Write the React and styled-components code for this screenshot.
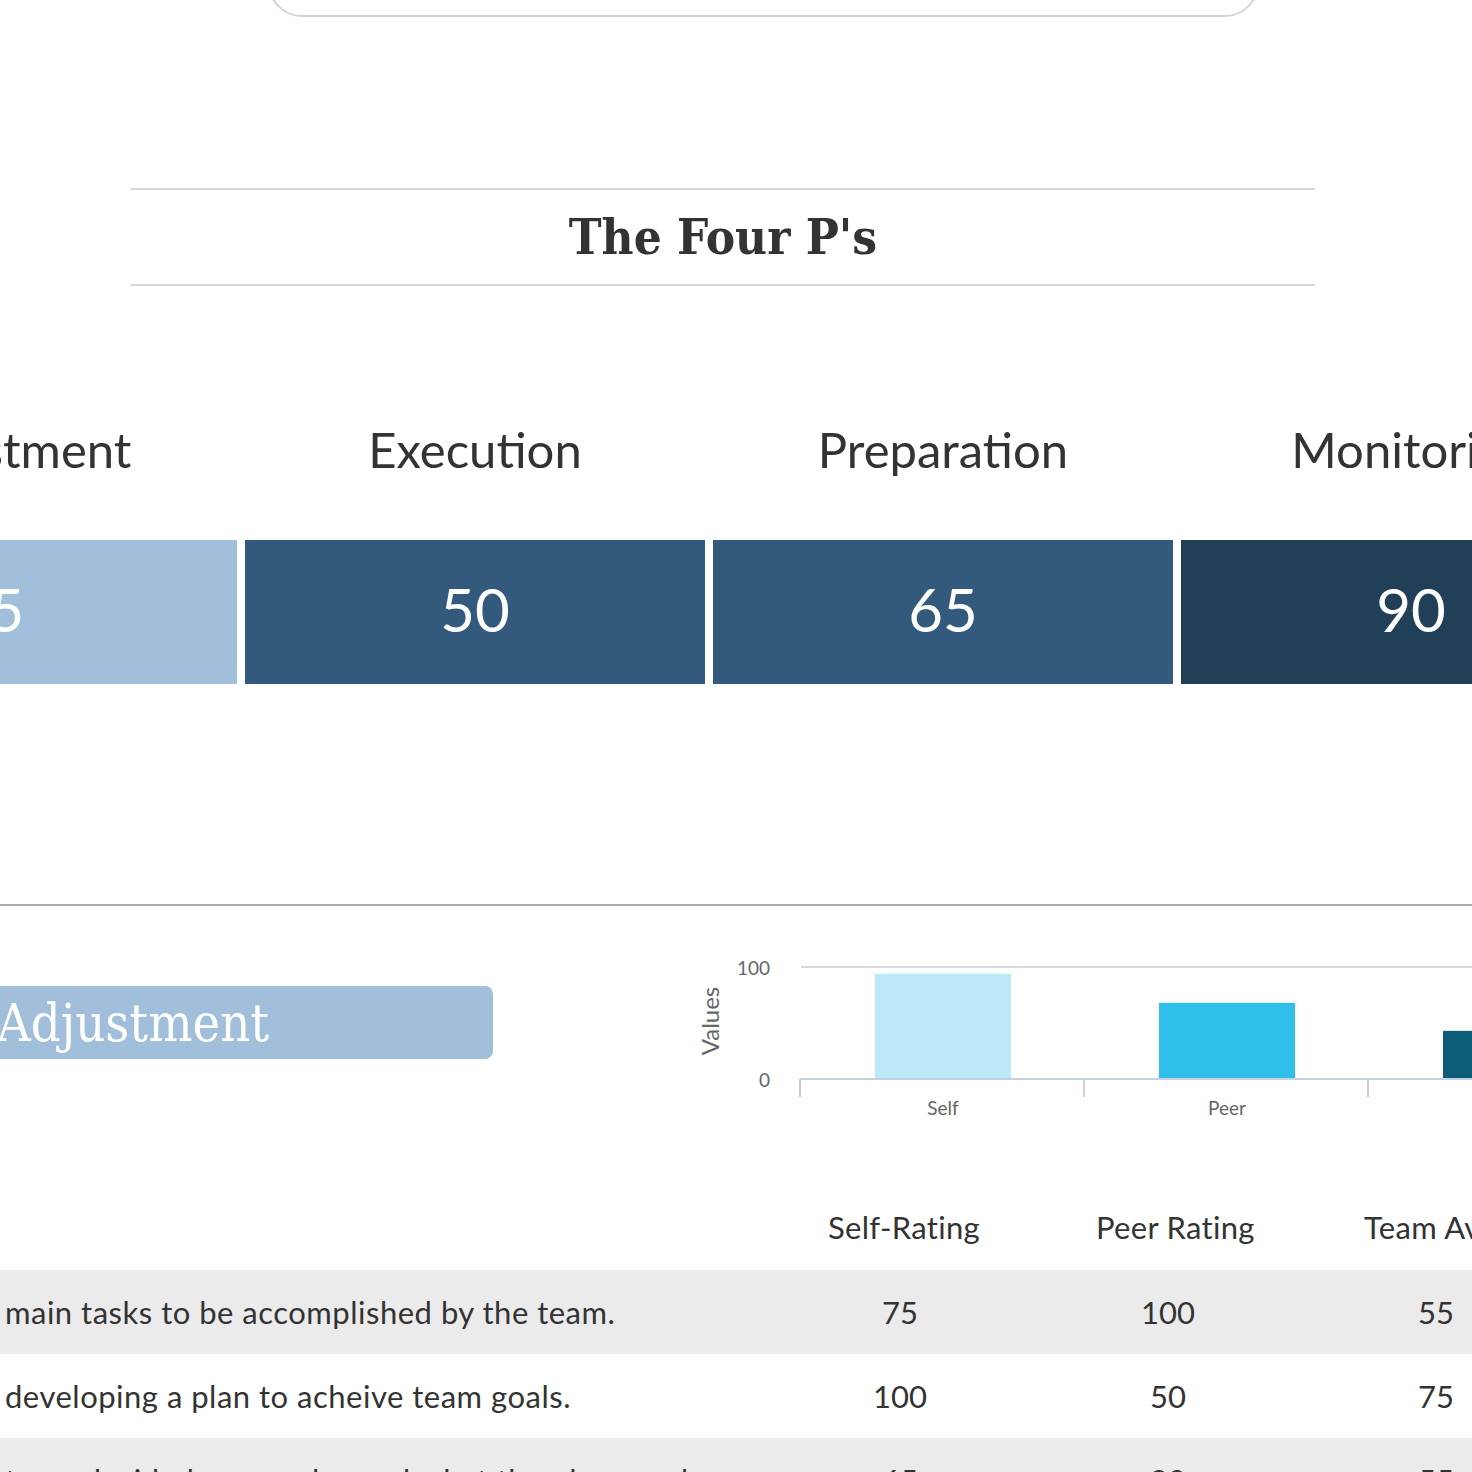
import styled, { createGlobalStyle } from "styled-components";

const GlobalStyle = createGlobalStyle`
  body {
    margin: 0;
    background: #fff;
    overflow: hidden;
    font-family: Lato, "Open Sans", sans-serif;
    color: #333;
  }
`;

// scores shown in the four P's strip
const scores = [
  { label: "Adjustment", value: 5, tone: "low" },
  { label: "Execution", value: 50, tone: "mid" },
  { label: "Preparation", value: 65, tone: "mid" },
  { label: "Monitoring", value: 90, tone: "high" },
];

const tones = {
  low: "#a1bfdb",
  mid: "#335a7c",
  high: "#223f58",
};

const rows = [
  { text: "main tasks to be accomplished by the team.", self: 75, peer: 100, team: 55 },
  { text: "developing a plan to acheive team goals.", self: 100, peer: 50, team: 75 },
  { text: "team decided upon roles and what the plan needs.", self: 65, peer: 80, team: 55 },
];

const bars = [
  { name: "Self", value: 94, color: "#bbe9f7" },
  { name: "Peer", value: 68, color: "#30bfea" },
  { name: "Team", value: 43, color: "#0d5c78" },
];

function Chart() {
  const zeroY = 139;
  const topY = 27;
  const scale = (zeroY - topY) / 100;
  return (
    <ChartSvg width="900" height="200" viewBox="0 0 900 200">
      <text
        x="0"
        y="0"
        transform="translate(29 81) rotate(-90)"
        textAnchor="middle"
        fontSize="24"
        fill="#666"
      >
        Values
      </text>
      <text x="80" y="35" textAnchor="end" fontSize="19" fill="#666">
        100
      </text>
      <text x="80" y="147" textAnchor="end" fontSize="19" fill="#666">
        0
      </text>
      <line x1="111" y1={topY} x2="900" y2={topY} stroke="#d8d8d8" strokeWidth="2" />
      {bars.map((b, i) => {
        const h = b.value * scale;
        return (
          <rect
            key={b.name}
            x={185 + i * 284}
            y={zeroY - h}
            width="136"
            height={h}
            fill={b.color}
          />
        );
      })}
      <line x1="110" y1={zeroY} x2="900" y2={zeroY} stroke="#c3d1e1" strokeWidth="2" />
      {[110, 394, 678].map((x) => (
        <line key={x} x1={x} y1={zeroY} x2={x} y2="157" stroke="#c3d1e1" strokeWidth="2" />
      ))}
      {bars.map((b, i) => (
        <text
          key={b.name}
          x={253 + i * 284}
          y="175"
          textAnchor="middle"
          fontSize="19"
          fill="#666"
        >
          {b.name}
        </text>
      ))}
    </ChartSvg>
  );
}

export default function App() {
  return (
    <>
      <GlobalStyle />
      <Page>
        <TopCard />
        <TitleBar>
          <Title>The Four P's</Title>
        </TitleBar>

        <ScoreGrid>
          {scores.map((s) => (
            <ScoreColumn key={s.label}>
              <ScoreLabel>{s.label}</ScoreLabel>
              <ScoreBar $tone={s.tone}>{s.value}</ScoreBar>
            </ScoreColumn>
          ))}
        </ScoreGrid>

        <Divider />

        <DetailRow>
          <Badge>Adjustment</Badge>
          <Chart />
        </DetailRow>

        <Table>
          <HeadCell />
          <HeadCell>Self-Rating</HeadCell>
          <HeadCell>Peer Rating</HeadCell>
          <HeadCell>Team Average</HeadCell>
          {rows.map((r, i) => (
            <Row key={i} $shaded={i % 2 === 0}>
              <TextCell>{r.text}</TextCell>
              <NumCell>{r.self}</NumCell>
              <NumCell>{r.peer}</NumCell>
              <NumCell>{r.team}</NumCell>
            </Row>
          ))}
        </Table>
      </Page>
    </>
  );
}

const Page = styled.div`
  width: 1472px;
  height: 1472px;
  overflow: hidden;
`;

const TopCard = styled.div`
  box-sizing: border-box;
  margin: -201px 0 0 268px;
  width: 991px;
  height: 218px;
  border: 2px solid #d4d4d4;
  border-radius: 34px;
`;

const TitleBar = styled.div`
  box-sizing: border-box;
  margin: 171px 0 0 131px;
  width: 1184px;
  height: 98px;
  border-top: 2px solid #d6d6d6;
  border-bottom: 2px solid #d6d6d6;
  display: flex;
  align-items: center;
  justify-content: center;
`;

const Title = styled.h1`
  margin: 0;
  font-family: "DejaVu Serif Condensed", "DejaVu Serif", serif;
  font-weight: bold;
  font-size: 49px;
  color: #333;
  line-height: 1;
`;

const ScoreGrid = styled.div`
  display: grid;
  grid-template-columns: repeat(4, 460px);
  column-gap: 8px;
  margin: 133px 0 0 -223px;
  width: 1864px;
`;

const ScoreColumn = styled.div`
  display: flex;
  flex-direction: column;
  align-items: stretch;
`;

const ScoreLabel = styled.div`
  text-align: center;
  font-size: 49px;
  line-height: 60px;
  color: #333;
  margin-bottom: 61px;
`;

const ScoreBar = styled.div`
  box-sizing: border-box;
  height: 144px;
  padding-bottom: 6px;
  background: ${(p) => tones[p.$tone]};
  color: #fff;
  font-size: 60px;
  display: flex;
  align-items: center;
  justify-content: center;
`;

const Divider = styled.hr`
  margin: 220px 0 0;
  border: 0;
  height: 2px;
  background: #ababab;
`;

const DetailRow = styled.div`
  display: flex;
  align-items: flex-start;
`;

const Badge = styled.div`
  box-sizing: border-box;
  margin: 80px 0 0 -140px;
  width: 633px;
  height: 73px;
  padding-left: 137px;
  background: #a1bfdb;
  border-radius: 8px;
  color: #fff;
  font-family: "DejaVu Serif Condensed", "DejaVu Serif", serif;
  font-size: 52px;
  display: flex;
  align-items: center;
  flex-shrink: 0;
`;

const ChartSvg = styled.svg`
  display: block;
  margin: 34px 0 0 197px;
  flex-shrink: 0;
  overflow: visible;
  font-family: Lato, sans-serif;
`;

const Table = styled.div`
  display: grid;
  grid-template-columns: 766px 268px 268px 268px;
  width: 1570px;
  margin-top: 70px;
`;

const HeadCell = styled.div`
  text-align: left;
  padding-left: 62px;
  white-space: nowrap;
  font-size: 31px;
  letter-spacing: 0.3px;
  line-height: 34px;
  padding-bottom: 26px;
  color: #333;
`;

const Row = styled.div`
  display: contents;
  & > * {
    background: ${(p) => (p.$shaded ? "#ebebeb" : "#fff")};
  }
`;

const TextCell = styled.div`
  height: 84px;
  display: flex;
  align-items: center;
  padding-left: 5px;
  font-size: 31px;
  letter-spacing: 0.5px;
  color: #333;
`;

const NumCell = styled.div`
  height: 84px;
  display: flex;
  align-items: center;
  justify-content: center;
  font-size: 31px;
  color: #333;
`;
